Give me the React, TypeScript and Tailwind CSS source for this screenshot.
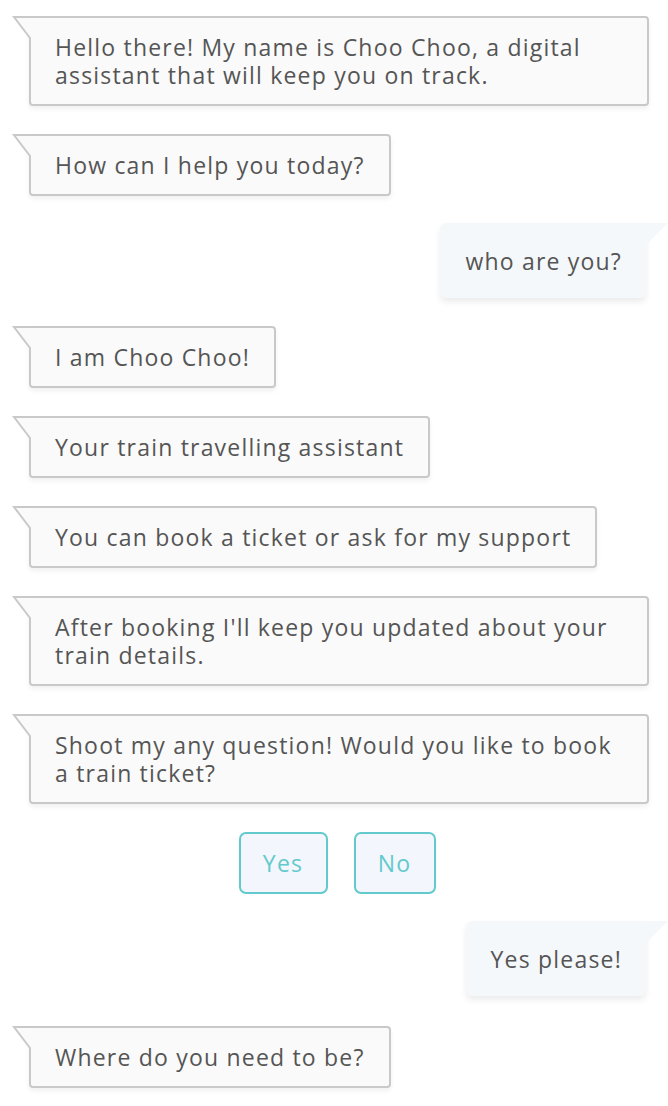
import React from "react";

const font = { fontFamily: '"Open Sans", "Liberation Sans", sans-serif' };

function Bot({ text, mt }: { text: string; mt: string }) {
  return (
    <div className={`relative self-start ml-[29px] max-w-[620px] border-2 border-[#c9c9c9] bg-[#fafafa] rounded-[4px] rounded-tl-none px-6 py-[15px] text-[23px] leading-[28px] tracking-[1.2px] text-[#555555] shadow-[0_3px_5px_rgba(0,0,0,0.06)] ${mt}`}>
      <svg
        className="absolute left-[-18px] top-[-2px] overflow-visible"
        width="20"
        height="24"
        viewBox="0 0 20 24"
      >
        <polygon points="1,1 20,1 20,24 17,24 17,22" fill="#fafafa" />
        <polyline
          points="20,1 1,1 17,22 17,24"
          fill="none"
          stroke="#c9c9c9"
          strokeWidth="2"
          strokeLinejoin="miter"
        />
      </svg>
      {text}
    </div>
  );
}

function User({ text, mt }: { text: string; mt: string }) {
  return (
    <div className={`relative self-end mr-[22px] bg-[#f5f8fb] rounded-[6px] rounded-tr-none pl-[25px] pr-[24px] py-[23.5px] text-[23px] leading-[28px] tracking-[1.2px] text-[#555555] shadow-[0_4px_6px_rgba(0,0,0,0.08)] ${mt}`}>
      <svg
        className="absolute right-[-22px] top-0"
        width="22"
        height="22"
        viewBox="0 0 22 22"
      >
        <polygon points="0,0 22,0 0,22" fill="#f5f8fb" />
      </svg>
      {text}
    </div>
  );
}

export default function App() {
  return (
    <div
      className="w-[668px] min-h-[1106px] bg-white flex flex-col pt-[16px]"
      style={font}
    >
      <Bot mt="mt-0" text="Hello there! My name is Choo Choo, a digital assistant that will keep you on track." />
      <Bot mt="mt-[28px]" text="How can I help you today?" />
      <User mt="mt-[27px]" text="who are you?" />
      <Bot mt="mt-[28px]" text="I am Choo Choo!" />
      <Bot mt="mt-[28px]" text="Your train travelling assistant" />
      <Bot mt="mt-[28px]" text="You can book a ticket or ask for my support" />
      <Bot mt="mt-[28px]" text="After booking I'll keep you updated about your train details." />
      <Bot mt="mt-[28px]" text="Shoot my any question! Would you like to book a train ticket?" />
      <div className="mt-[28px] flex justify-center gap-[26px] pl-[6px]">
        <button className="w-[89px] h-[62px] rounded-[7px] border-2 border-[#62cacc] bg-[#f3f6fd] text-[#62cacc] text-[23px] tracking-[1.2px]">
          Yes
        </button>
        <button className="w-[82px] h-[62px] rounded-[7px] border-2 border-[#62cacc] bg-[#f3f6fd] text-[#62cacc] text-[23px] tracking-[1.2px]">
          No
        </button>
      </div>
      <User mt="mt-[27px]" text="Yes please!" />
      <Bot mt="mt-[30px]" text="Where do you need to be?" />
    </div>
  );
}
